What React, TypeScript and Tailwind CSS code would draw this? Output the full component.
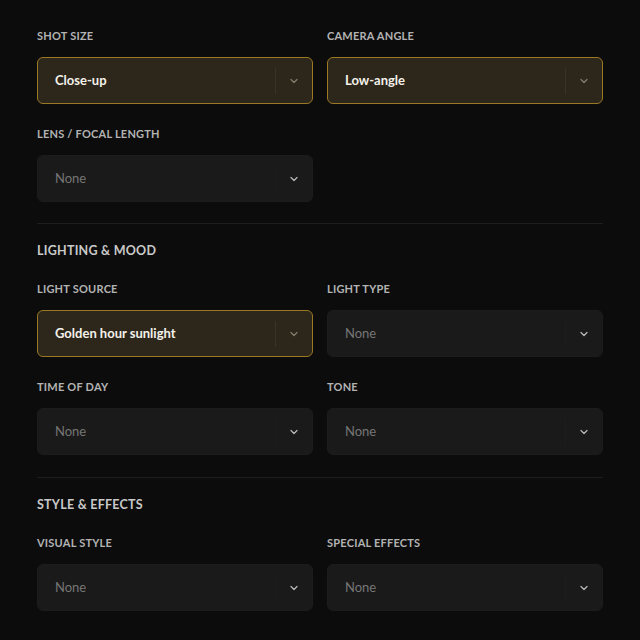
import React from "react";

const Chevron = ({ c }: { c: string }) => (
  <svg width="12" height="12" viewBox="0 0 24 24" fill="none" stroke={c} strokeWidth="2.5" strokeLinecap="round" strokeLinejoin="round">
    <path d="M6 9l6 6 6-6" />
  </svg>
);

function Select({ value, active }: { value?: string; active?: boolean }) {
  if (active) {
    return (
      <div className="h-[47px] rounded-[6px] border border-[#9a7824] bg-[#2c261b] flex items-center">
        <span className="flex-1 pl-[17px] text-[13px] font-bold text-[#f4f1ea]">{value}</span>
        <div className="w-px h-[26px] bg-[#3a3324]" />
        <div className="w-[36px] flex justify-center">
          <Chevron c="#857d6c" />
        </div>
      </div>
    );
  }
  return (
    <div className="h-[47px] rounded-[6px] bg-[#1a1a1a] border border-[#1c1c1c] flex items-center">
      <span className="flex-1 pl-[17px] text-[13px] text-[#767676]">None</span>
      <div className="w-px h-[26px] bg-[#1d1d1d]" />
      <div className="w-[36px] flex justify-center">
        <Chevron c="#b8b8b8" />
      </div>
    </div>
  );
}

function Field({ label, value, active }: { label: string; value?: string; active?: boolean }) {
  return (
    <div className="flex flex-col">
      <div className="h-[14px] leading-[14px] text-[11px] font-bold tracking-[0.02em] text-[#b3b3b3] uppercase">{label}</div>
      <div className="mt-[14px]">
        <Select value={value} active={active} />
      </div>
    </div>
  );
}

function Header({ children }: { children: string }) {
  return <div className="h-[16px] leading-[16px] text-[12.5px] font-bold tracking-[0.02em] text-[#c9c9c9]">{children}</div>;
}

export default function App() {
  return (
    <div className="w-[640px] h-[640px] bg-[#0c0c0c] overflow-hidden" style={{ fontFamily: "Lato, 'Open Sans', sans-serif" }}>
      <div className="px-[37px] pt-[29px] flex flex-col">
        <div className="grid grid-cols-2 gap-x-[14px] gap-y-[23px]">
          <Field label="Shot Size" value="Close-up" active />
          <Field label="Camera Angle" value="Low-angle" active />
          <Field label="Lens / Focal Length" />
        </div>
        <div className="mt-[21px] h-px bg-[#1e1e1e]" />
        <div className="mt-[19px]"><Header>LIGHTING &amp; MOOD</Header></div>
        <div className="mt-[23px] grid grid-cols-2 gap-x-[14px] gap-y-[23px]">
          <Field label="Light Source" value="Golden hour sunlight" active />
          <Field label="Light Type" />
          <Field label="Time of Day" />
          <Field label="Tone" />
        </div>
        <div className="mt-[22px] h-px bg-[#1e1e1e]" />
        <div className="mt-[19px]"><Header>STYLE &amp; EFFECTS</Header></div>
        <div className="mt-[23px] grid grid-cols-2 gap-x-[14px] gap-y-[23px]">
          <Field label="Visual Style" />
          <Field label="Special Effects" />
        </div>
      </div>
    </div>
  );
}
